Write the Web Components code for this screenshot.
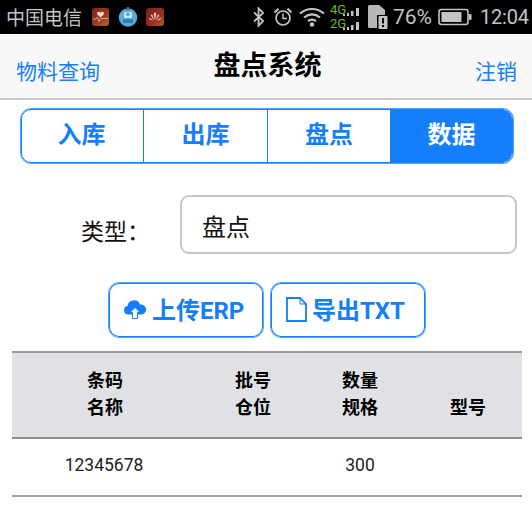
<!DOCTYPE html>
<html lang="zh">
<head>
<meta charset="utf-8">
<title>盘点系统</title>
<style>
  html, body { margin: 0; padding: 0; background: #fff; }
  body { font-family: "Noto Sans CJK SC", "Noto Sans", sans-serif; width: 532px; height: 508px; overflow: hidden; }
</style>
</head>
<body>
<status-bar></status-bar>
<nav-bar title="盘点系统" left="物料查询" right="注销"></nav-bar>
<seg-control items="入库,出库,盘点,数据" active="3"></seg-control>
<type-field label="类型：" value="盘点"></type-field>
<div id="actions" style="display:flex;justify-content:flex-start;gap:6px;padding:28px 0 0 108px">
  <action-button icon="cloud">上传ERP</action-button>
  <action-button icon="file">导出TXT</action-button>
</div>
<data-table></data-table>

<script>
const BLUE = '#157efb';
const BLUE_EDGE = '#5aa4fc';

class StatusBar extends HTMLElement {
  constructor() {
    super();
    this.attachShadow({ mode: 'open' });
    this.shadowRoot.innerHTML = `
    <style>
      :host { display: flex; align-items: center; height: 34px; background: #000; color: #c4c4c4; font-family: "Noto Sans CJK SC", sans-serif; overflow: hidden; }
      .carrier { font-size: 19px; margin-left: 6px; width: 86px; flex: none; line-height: 34px; white-space: nowrap; }
      svg { display: block; flex: none; }
      .net { width: 30px; height: 30px; position: relative; margin-left: 5px; flex: none; }
      .net span { position: absolute; left: 0; font: 13px/13px Roboto, sans-serif; color: #6fb52c; }
      .pct { font: 21px/34px Roboto, sans-serif; margin-left: 5px; flex: none; width: 40px; white-space: nowrap; }
      .time { font: 20px/34px Roboto, sans-serif; margin-left: 8px; flex: none; letter-spacing: -.2px; }
    </style>
    <span class="carrier">中国电信</span>
    <svg width="17" height="18" viewBox="0 0 17 18">
      <defs><linearGradient id="a" x1="0" y1="0" x2="1" y2="1"><stop offset="0" stop-color="#7c2418"/><stop offset=".6" stop-color="#a33a20"/><stop offset="1" stop-color="#a8702a"/></linearGradient></defs>
      <rect width="17" height="18" rx="3" fill="url(#a)"/>
      <path d="M8.500 9.500 5.500 6.800C4.400 5.400 5.400 3.800 6.800 3.800c.8 0 1.400.4 1.700 1 .3-.6.9-1 1.700-1 1.500 0 2.400 1.600 1.300 3z" fill="#e6d8d0"/>
      <path d="M1 11h3l1.500-2 1.500 5 1.600-3.500H16" fill="none" stroke="#dcb6a4" stroke-width=".8"/>
    </svg>
    <svg width="20" height="20" viewBox="0 0 20 20" style="margin-left:9px">
      <circle cx="10" cy="10.500" r="9.300" fill="#58a9d6"/>
      <rect x="8.600" y="0" width="2.800" height="3" fill="#2d6f98"/>
      <rect x="6" y="5" width="8" height="6" fill="#c8dfe8"/>
      <circle cx="10" cy="7.300" r="1.700" fill="#5f96b5"/>
      <path d="M5 16v-3.600h10V16z" fill="#2e7fb0"/>
    </svg>
    <svg width="18" height="18" viewBox="0 0 18 18" style="margin-left:8px">
      <defs><linearGradient id="b" x1="0" y1="0" x2="1" y2="1"><stop offset="0" stop-color="#7b2018"/><stop offset=".65" stop-color="#a2321f"/><stop offset="1" stop-color="#a6682a"/></linearGradient></defs>
      <rect width="18" height="18" rx="3" fill="url(#b)"/>
      <path d="M9 12.500 7.800 6 9 4l1.200 2zM8 12.500 4.800 7.400 6 6zM10 12.500 13.200 7.400 12 6zM7.500 12.800 3 9.500l.6 2zM10.500 12.800 15 9.500l-.6 2z" fill="#e8d5ca"/>
    </svg>
    <svg width="14" height="20" viewBox="0 0 14 22" style="margin-left:88px">
      <path d="M1.500 6 11.500 15.500 6.500 20.500V1.500L11.500 6.500 1.500 16" fill="none" stroke="#c4c4c4" stroke-width="2"/>
    </svg>
    <svg width="20" height="20" viewBox="0 0 20 20" style="margin-left:7px">
      <circle cx="10" cy="11" r="7" fill="none" stroke="#c4c4c4" stroke-width="1.700"/>
      <path d="M10 6.500V11.500H14" fill="none" stroke="#c4c4c4" stroke-width="1.500"/>
      <path d="M1.500 5.500 5.500 1.800M18.500 5.500 14.500 1.800" stroke="#c4c4c4" stroke-width="2.200"/>
    </svg>
    <svg width="26" height="20" viewBox="0 0 26 20" style="margin-left:6px">
      <g fill="none" stroke="#c4c4c4" stroke-width="2.200">
        <path d="M1 6.500C8 .5 18 .5 25 6.500"/>
        <path d="M5 10.500C10 6.500 16 6.500 21 10.500"/>
        <path d="M9 14C11.500 12.300 14.500 12.300 17 14"/>
      </g>
      <circle cx="13" cy="17.500" r="2.200" fill="#c4c4c4"/>
    </svg>
    <div class="net">
      <span style="top:1px">4G</span><span style="top:15px">2G</span>
      <svg width="30" height="30" viewBox="0 0 30 30" style="position:absolute;left:0;top:0">
        <g fill="#c4c4c4">
          <rect x="13" y="12" width="2" height="2"/><rect x="17" y="11" width="2" height="3"/><rect x="21" y="9" width="2.500" height="5"/><rect x="26" y="6" width="3" height="8"/>
          <rect x="13" y="26" width="2" height="2"/><rect x="17" y="25" width="2" height="3"/><rect x="21" y="23" width="2.500" height="5"/><rect x="26" y="20" width="3" height="8"/>
        </g>
      </svg>
    </div>
    <svg width="20" height="24" viewBox="0 0 20 24" style="margin-left:8px">
      <path d="M0 1.500A1.500 1.500 0 0 1 1.500 0H11L17 5V10H9V23H1.500A1.500 1.500 0 0 1 0 21.500Z" fill="#b8b8b8"/>
      <rect x="10.500" y="11" width="9" height="13" rx="1" fill="#c4c4c4"/>
      <rect x="14" y="13" width="2" height="5.500" fill="#000"/><rect x="14" y="20" width="2" height="2" fill="#000"/>
    </svg>
    <span class="pct">76%</span>
    <svg width="34" height="18" viewBox="0 0 34 18" style="margin-left:5px">
      <rect x="1" y="1.500" width="29" height="15" rx="2.500" fill="none" stroke="#c4c4c4" stroke-width="1.600"/>
      <rect x="3.500" y="4" width="20" height="10" fill="#c4c4c4"/>
      <rect x="31" y="6" width="2.500" height="6" rx="1" fill="#c4c4c4"/>
    </svg>
    <span class="time">12:04</span>
    `;
  }
}

class NavBar extends HTMLElement {
  constructor() {
    super();
    this.attachShadow({ mode: 'open' });
  }
  connectedCallback() {
    this.shadowRoot.innerHTML = `
    <style>
      :host { display: block; box-sizing: border-box; height: 66px; background: #f8f8f8; border-bottom: 2px solid #c9c9c9; position: relative; font-family: "Noto Sans CJK SC", sans-serif; }
      .bar { display: flex; justify-content: space-between; padding: 20px 15px 0 16px; }
      .side { color: ${BLUE}; font-size: 21px; line-height: 32px; }
      h1 { position: absolute; left: 0; right: 0; top: 11px; margin: 0; padding-left: 3px; text-align: center; font-size: 27px; line-height: 38px; font-weight: 700; color: #000; }
    </style>
    <div class="bar">
      <span class="side">${this.getAttribute('left')}</span>
      <span class="side">${this.getAttribute('right')}</span>
    </div>
    <h1>${this.getAttribute('title')}</h1>
    `;
  }
}

class SegControl extends HTMLElement {
  constructor() {
    super();
    this.attachShadow({ mode: 'open' });
  }
  connectedCallback() {
    const items = this.getAttribute('items').split(',');
    const active = Number(this.getAttribute('active'));
    const cells = items.map((t, i) => `<div class="seg${i === active ? ' on' : ''}">${t}</div>`).join('');
    this.shadowRoot.innerHTML = `
    <style>
      :host { display: block; padding: 8px 18px 0 20px; }
      .edge { box-sizing: border-box; height: 56px; border: 1px solid ${BLUE_EDGE}; border-radius: 11px; }
      .wrap { display: grid; grid-template-columns: 121px 124px 123px 1fr; box-sizing: border-box; height: 100%; border: 1px solid ${BLUE}; border-radius: 10px; overflow: hidden; }
      .seg { display: flex; align-items: center; justify-content: center; color: ${BLUE}; font: 700 24px "Noto Sans CJK SC", sans-serif; border-left: 1px solid ${BLUE}; padding-bottom: 7px; }
      .seg:first-child { border-left: 0; padding-right: 2px; }
      .on { background: ${BLUE}; color: #fff; }
    </style>
    <div class="edge"><div class="wrap">${cells}</div></div>
    `;
  }
}

class TypeField extends HTMLElement {
  constructor() {
    super();
    this.attachShadow({ mode: 'open' });
  }
  connectedCallback() {
    this.shadowRoot.innerHTML = `
    <style>
      :host { display: flex; align-items: center; padding: 31px 15px 0 0; font-family: "Noto Sans CJK SC", sans-serif; color: #111; }
      .label { width: 180px; box-sizing: border-box; padding: 10px 0 0 81px; font-size: 23px; line-height: 32px; white-space: nowrap; }
      .box { flex: 1; box-sizing: border-box; height: 59px; border: 2px solid #c8c8c8; border-radius: 9px; padding: 1px 0 0 20px; display: flex; align-items: center; font-size: 24px; }
    </style>
    <span class="label">${this.getAttribute('label')}</span>
    <div class="box">${this.getAttribute('value')}</div>
    `;
  }
}

class ActionButton extends HTMLElement {
  constructor() {
    super();
    this.attachShadow({ mode: 'open' });
  }
  connectedCallback() {
    const icons = {
      cloud: `<svg width="24" height="20" viewBox="0 0 24 20"><path d="M5 14.500A4.300 4.300 0 0 1 4.500 6 6.500 6.500 0 0 1 17 4.500 5 5 0 0 1 19 14.500Z" fill="${BLUE}"/><path d="M12 7.500 17 12.500H14.500V18.500H9.500V12.500H7Z" fill="#fff" stroke="${BLUE}" stroke-width="1"/></svg>`,
      file: `<svg width="21" height="25" viewBox="0 0 21 25" style="margin-left:1px"><path d="M1 1H14L20 7V24H1Z" fill="none" stroke="${BLUE}" stroke-width="1.800"/><path d="M14 1V7H20" fill="none" stroke="${BLUE}" stroke-width="1"/></svg>`
    };
    this.shadowRoot.innerHTML = `
    <style>
      :host { display: flex; align-items: center; gap: 5px; box-sizing: border-box; width: 156px; height: 56px; padding: 0 0 4px 14px; border: 1px solid ${BLUE_EDGE}; box-shadow: inset 0 0 0 1px ${BLUE}; border-radius: 11px; color: ${BLUE}; font: 700 24px Roboto, "Noto Sans CJK SC", sans-serif; white-space: nowrap; }
      svg { display: block; flex: none; margin-top: 3px; }
    </style>
    ${icons[this.getAttribute('icon')]}
    <slot></slot>
    `;
  }
}

class DataTable extends HTMLElement {
  constructor() {
    super();
    this.attachShadow({ mode: 'open' });
    this.shadowRoot.innerHTML = `
    <style>
      :host { display: block; margin: 13px 10px 0 12px; font-family: "Noto Sans CJK SC", sans-serif; color: #111; }
      .row { display: grid; grid-template-columns: 186px 110px 104px 110px; text-align: center; box-sizing: border-box; }
      .head { height: 88px; background: #e0e1e5; border-top: 2px solid #9a9a9a; border-bottom: 2px solid #8e8e8e; font-size: 18px; font-weight: 700; line-height: 27px; align-content: start; padding-top: 13px; color: #000; }
      .head div { display: flex; flex-direction: column; justify-content: flex-end; height: 54px; }
      .head div:last-child { padding-left: 2px; }
      .body { height: 58px; border-bottom: 2px solid #a0a0a0; font: 17.500px/53px Roboto, sans-serif; color: #222; }
      .body span:first-child { padding-right: 2px; }
    </style>
    <div class="row head">
      <div><span>条码</span><span>名称</span></div>
      <div><span>批号</span><span>仓位</span></div>
      <div><span>数量</span><span>规格</span></div>
      <div><span>型号</span></div>
    </div>
    <div class="row body">
      <span>12345678</span><span></span><span>300</span><span></span>
    </div>
    `;
  }
}

customElements.define('status-bar', StatusBar);
customElements.define('nav-bar', NavBar);
customElements.define('seg-control', SegControl);
customElements.define('type-field', TypeField);
customElements.define('action-button', ActionButton);
customElements.define('data-table', DataTable);
</script>
</body>
</html>
